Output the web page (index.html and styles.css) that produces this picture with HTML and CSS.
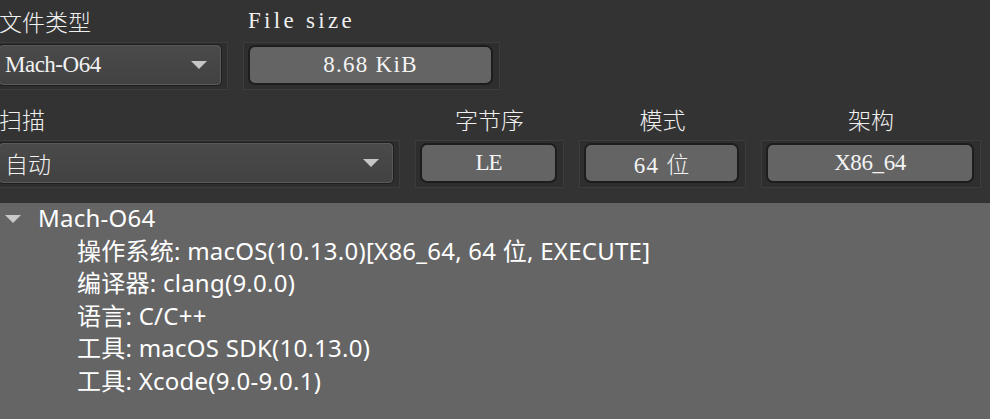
FILE: index.html
```html
<!DOCTYPE html>
<html lang="zh">
<head>
<meta charset="utf-8">
<title>Mach-O64</title>
<link rel="stylesheet" href="styles.css">
</head>
<body>
<div class="app">
  <div class="row">
    <div class="field w-type">
      <div class="label cjk">文件类型</div>
      <div class="frame">
        <div class="combo"><span class="combo-text serif ls-type">Mach-O64</span><span class="arrow"></span></div>
      </div>
    </div>
    <div class="field w-size">
      <div class="label serif ls-fsize">File size</div>
      <div class="frame"><div class="value serif ls-size">8.68 KiB</div></div>
    </div>
  </div>
  <div class="row">
    <div class="field w-scan">
      <div class="label cjk">扫描</div>
      <div class="frame">
        <div class="combo"><span class="combo-text cjk">自动</span><span class="arrow"></span></div>
      </div>
    </div>
    <div class="field w-endian">
      <div class="label cjk center">字节序</div>
      <div class="frame"><div class="value serif ls-le">LE</div></div>
    </div>
    <div class="field w-mode">
      <div class="label cjk center">模式</div>
      <div class="frame"><div class="value serif ls-mode">64 <span class="cjk">位</span></div></div>
    </div>
    <div class="field w-arch">
      <div class="label cjk center">架构</div>
      <div class="frame"><div class="value serif ls-arch">X86_64</div></div>
    </div>
  </div>
</div>
<div class="tree">
  <div class="node root"><span class="twisty"></span><span>Mach-O64</span></div>
  <div class="node child">操作系统: macOS(10.13.0)[X86_64, 64 位, EXECUTE]</div>
  <div class="node child">编译器: clang(9.0.0)</div>
  <div class="node child">语言: C/C++</div>
  <div class="node child">工具: macOS SDK(10.13.0)</div>
  <div class="node child">工具: Xcode(9.0-9.0.1)</div>
</div>
</body>
</html>
```
FILE: styles.css
```css
html, body {
  margin: 0;
  padding: 0;
  background: #333333;
  width: 990px;
  height: 419px;
  overflow: hidden;
}
body {
  color: #f2f2f2;
  font-family: "Noto Sans", "Noto Sans CJK SC", sans-serif;
}
.serif {
  font-family: "Liberation Serif", "Noto Sans CJK SC", serif;
  font-size: 23px;
}
.ls-type { letter-spacing: -0.5px; }
.ls-fsize { letter-spacing: 3.3px; }
.ls-size { letter-spacing: 1.3px; }
.ls-le { letter-spacing: -1px; }
.ls-mode { letter-spacing: 1.2px; }
.ls-arch { letter-spacing: -0.4px; }
.cjk {
  font-family: "Noto Sans CJK SC", sans-serif;
  font-size: 23px;
  font-weight: 300;
  letter-spacing: 0;
}
.app {
  margin-left: -6px;
  display: flex;
  flex-direction: column;
  gap: 8px;
}
.row {
  display: flex;
  gap: 15px;
}
.field {
  display: flex;
  flex-direction: column;
}
.w-type { width: 234px; }
.w-size { width: 257px; }
.w-scan { width: 406px; }
.w-endian { width: 149px; }
.w-mode { width: 167px; }
.w-arch { width: 220px; }
.label {
  height: 42px;
  line-height: 42px;
  padding-left: 5px;
  color: #f0f0f0;
  white-space: nowrap;
}
.label.center {
  text-align: center;
  padding-left: 0;
}
.frame {
  box-sizing: border-box;
  height: 48px;
  border: 1px solid #3c3c3c;
  background: #2e2e2e;
  padding: 2px 6px 4px 4px;
}
.value {
  box-sizing: border-box;
  height: 40px;
  border: 2px solid #1d1d1d;
  border-radius: 7px;
  background: #646464;
  text-align: center;
  line-height: 36px;
  color: #f4f4f4;
  white-space: nowrap;
}
.value .cjk { font-size: 23px; }
.combo {
  box-sizing: border-box;
  height: 40px;
  border: 1px solid #5a5a5a;
  border-radius: 4px;
  box-shadow: 0 0 0 1px #1e1e1e;
  background: linear-gradient(#4a4a4a, #424242);
  display: flex;
  align-items: center;
  justify-content: space-between;
  padding: 0 13px 0 5px;
}
.combo-text {
  color: #f2f2f2;
  white-space: nowrap;
}
.arrow {
  width: 0;
  height: 0;
  border-left: 8px solid transparent;
  border-right: 8px solid transparent;
  border-top: 8px solid #c6c6c6;
}
.tree {
  margin-top: 15px;
  height: 216px;
  background: #656565;
  font-size: 24px;
  letter-spacing: 0.25px;
  color: #ffffff;
  display: flex;
  flex-direction: column;
}
.node {
  box-sizing: border-box;
  height: 32.4px;
  padding-bottom: 4px;
  display: flex;
  align-items: center;
  white-space: nowrap;
}
.root { padding-left: 5px; }
.twisty {
  width: 0;
  height: 0;
  border-left: 8px solid transparent;
  border-right: 8px solid transparent;
  border-top: 8px solid #c9c9c9;
  margin-top: 4px;
  margin-right: 17px;
}
.child { padding-left: 77px; }
```
